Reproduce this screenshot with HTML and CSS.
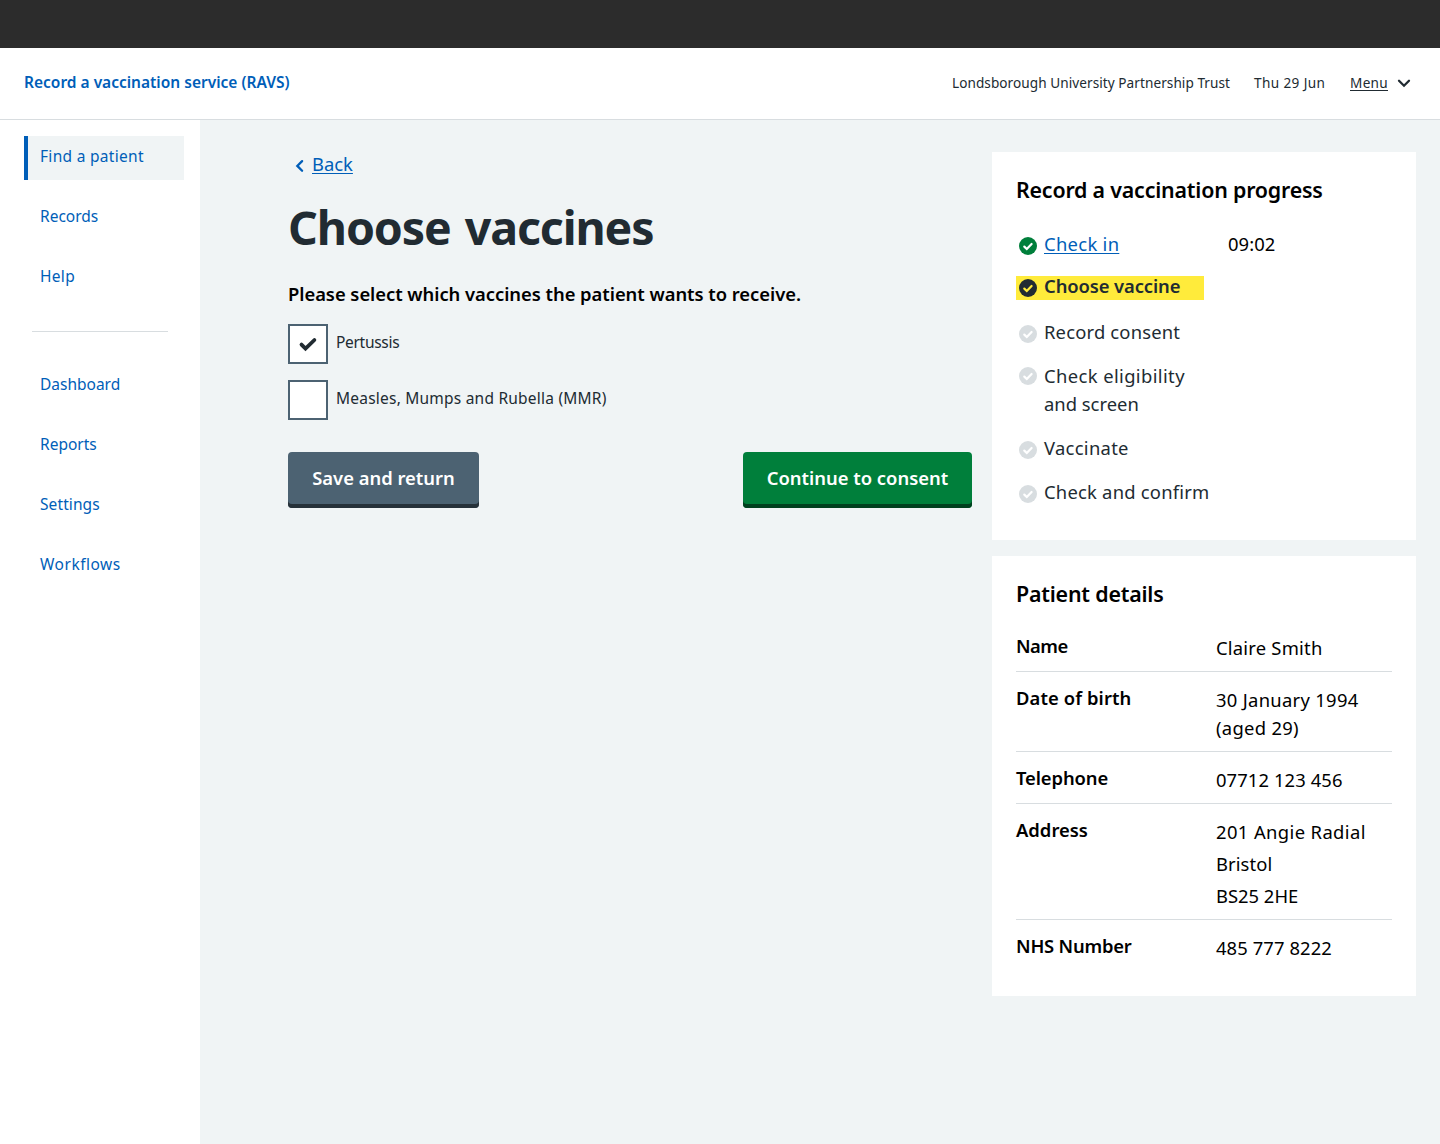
FILE: index.html
```html
<!DOCTYPE html>
<html lang="en">
<head>
<meta charset="utf-8">
<title>Choose vaccines - Record a vaccination service (RAVS)</title>
<link rel="stylesheet" href="styles.css">
</head>
<body>
<svg width="0" height="0" class="sprite" aria-hidden="true">
  <symbol id="tick" viewBox="0 0 18 18">
    <circle cx="9" cy="9" r="9" fill="currentColor" stroke="none"/>
    <path d="M5.3 9.6l2.5 2.4 4.8-5" fill="none" stroke-width="2.2" stroke-linecap="round" stroke-linejoin="miter"/>
  </symbol>
</svg>
<div class="topbar"></div>
<header class="header">
  <a class="brand" href="#">Record a vaccination service (RAVS)</a>
  <div class="header-meta">
    <span class="org">Londsborough University Partnership Trust</span>
    <span class="date t4">Thu 29 Jun</span>
    <a class="menu" href="#"><span class="menu-label t3">Menu</span><svg width="14" height="10" viewBox="0 0 14 10"><path d="M2 2.7l5 5 5-5" fill="none" stroke="#212b32" stroke-width="2.3" stroke-linecap="round" stroke-linejoin="miter"/></svg></a>
  </div>
</header>
<div class="layout">
  <nav class="sidenav">
    <a class="nav-item current t3" href="#">Find a patient</a>
    <a class="nav-item" href="#">Records</a>
    <a class="nav-item t3" href="#">Help</a>
    <hr class="nav-rule">
    <a class="nav-item" href="#">Dashboard</a>
    <a class="nav-item" href="#">Reports</a>
    <a class="nav-item t1" href="#">Settings</a>
    <a class="nav-item t5" href="#">Workflows</a>
  </nav>
  <div class="page">
    <main class="content">
      <a class="back" href="#"><svg width="24" height="24" viewBox="0 0 24 24"><path d="M14.1 7.1L9.3 11.9l4.8 4.9" fill="none" stroke="currentColor" stroke-width="2.3" stroke-linecap="round" stroke-linejoin="miter"/></svg><span class="link">Back</span></a>
      <h1 class="title">Choose vaccines</h1>
      <p class="hint">Please select which vaccines the patient wants to receive.</p>
      <div class="choices">
        <label class="choice"><span class="box"><svg width="20" height="16" viewBox="0 0 20 16"><path d="M3.5 8.6l4 4 8.9-8.6" fill="none" stroke="#212b32" stroke-width="3.8" stroke-linecap="round"/></svg></span><span class="choice-label tn3">Pertussis</span></label>
        <label class="choice"><span class="box"></span><span class="choice-label t25">Measles, Mumps and Rubella (MMR)</span></label>
      </div>
      <div class="actions">
        <button class="btn secondary">Save and return</button>
        <button class="btn primary">Continue to consent</button>
      </div>
    </main>
    <aside class="aside">
      <section class="card progress">
        <h2 class="card-title tn2">Record a vaccination progress</h2>
        <ol class="steps">
          <li class="step done"><svg class="icon"><use href="#tick"/></svg><a class="step-name link t3" href="#">Check in</a><span class="time t1">09:02</span></li>
          <li class="step active"><svg class="icon"><use href="#tick"/></svg><span class="step-name tn1">Choose vaccine</span></li>
          <li class="step"><svg class="icon"><use href="#tick"/></svg><span class="step-name t2">Record consent</span></li>
          <li class="step two-line"><svg class="icon"><use href="#tick"/></svg><span class="step-name"><span class="t4">Check eligibility</span><br><span>and screen</span></span></li>
          <li class="step"><svg class="icon"><use href="#tick"/></svg><span class="step-name t3">Vaccinate</span></li>
          <li class="step"><svg class="icon"><use href="#tick"/></svg><span class="step-name t25">Check and confirm</span></li>
        </ol>
      </section>
      <section class="card details">
        <h2 class="card-title tn2">Patient details</h2>
        <dl class="summary">
          <div class="row"><dt class="tn4">Name</dt><dd><span class="t25">Claire Smith</span></dd></div>
          <div class="row"><dt class="t1">Date of birth</dt><dd><span class="t3">30 January 1994</span><span class="t3">(aged 29)</span></dd></div>
          <div class="row"><dt class="tn1">Telephone</dt><dd><span class="t1">07712 123 456</span></dd></div>
          <div class="row"><dt>Address</dt><dd class="spaced"><span class="t4">201 Angie Radial</span><span class="t1">Bristol</span><span>BS25 2HE</span></dd></div>
          <div class="row"><dt class="tn2">NHS Number</dt><dd><span class="t1">485 777 8222</span></dd></div>
        </dl>
      </section>
    </aside>
  </div>
</div>
</body>
</html>
```
FILE: styles.css
```css
* { box-sizing: border-box; }
body {
  margin: 0;
  min-height: 1144px;
  display: flex;
  flex-direction: column;
  font-family: "Noto Sans", "Open Sans", sans-serif;
  font-size: 18.4px;
  line-height: 28px;
  color: #212b32;
  background: #fff;
}
h1, h2, p, ol, dl, dd { margin: 0; padding: 0; }
a { color: #005eb8; text-decoration: none; }
.sprite { display: block; height: 0; }

/* letter-spacing steps */
.tn4 { letter-spacing: -0.5px; }
.tn3 { letter-spacing: -0.3px; }
.tn2 { letter-spacing: -0.2px; }
.tn1 { letter-spacing: -0.1px; }
.t1 { letter-spacing: 0.1px; }
.t2 { letter-spacing: 0.18px; }
.t25 { letter-spacing: 0.22px; }
.t3 { letter-spacing: 0.3px; }
.t4 { letter-spacing: 0.39px; }
.t5 { letter-spacing: 0.5px; }

.topbar { height: 48px; background: #2c2c2c; }

.header {
  height: 72px;
  padding: 0 29px 0 24px;
  display: flex;
  justify-content: space-between;
  align-items: flex-start;
  border-bottom: 1px solid #d8dde0;
  line-height: 24px;
}
.brand { margin-top: 22px; font-size: 15.5px; font-weight: 600; }
.header-meta { margin-top: 23px; display: flex; font-size: 13.6px; }
.org { width: 302px; letter-spacing: 0.06px; }
.date { width: 96px; }
.menu { display: flex; align-items: center; gap: 9px; color: #212b32; }
.menu-label {
  text-decoration: underline;
  text-decoration-thickness: 1px;
  text-underline-offset: 2px;
  text-decoration-skip-ink: none;
}

.layout { flex: 1; display: flex; }
.sidenav {
  width: 200px;
  padding: 16px 16px 0 24px;
  display: flex;
  flex-direction: column;
  gap: 16px;
}
.nav-item {
  height: 44px;
  padding: 8px 12px 12px;
  border-left: 4px solid transparent;
  font-size: 15.5px;
  line-height: 24px;
}
.nav-item.current { background: #f0f4f5; border-left-color: #005eb8; }
.nav-rule {
  width: 136px;
  height: 1px;
  margin: 15px 8px 16px;
  border: 0;
  background: #d8dde0;
}

.page {
  flex: 1;
  padding: 32px 24px 32px 88px;
  display: flex;
  gap: 20px;
  align-items: flex-start;
  background: #f0f4f5;
}
.content { width: 684px; margin-top: -2px; }
.back { display: flex; width: max-content; }
.back svg { margin-top: 4px; }
.link {
  text-decoration: underline;
  text-decoration-thickness: 1px;
  text-underline-offset: 2px;
  text-decoration-skip-ink: none;
}
.title {
  margin-top: 21px;
  font-size: 46.5px;
  line-height: 56px;
  font-weight: 700;
  letter-spacing: -1.1px;
  word-spacing: 3px;
}
.hint { margin-top: 25px; font-weight: 600; color: #000; letter-spacing: -0.04px; }
.choices { margin-top: 16px; display: flex; flex-direction: column; gap: 16px; }
.choice { display: flex; gap: 8px; height: 40px; }
.box {
  width: 40px;
  height: 40px;
  border: 2px solid #4c6272;
  background: #fff;
  display: flex;
  align-items: center;
  justify-content: center;
}
.choice-label { margin-top: 6px; font-size: 15.5px; line-height: 24px; }
.actions { margin-top: 32px; display: flex; justify-content: space-between; }
.btn {
  height: 56px;
  padding: 12px 0 16px;
  border: 0;
  border-radius: 4px;
  font: 600 18.4px/28px "Noto Sans", sans-serif;
  color: #fff;
  text-align: center;
}
.secondary { width: 191px; background: #4c6272; box-shadow: inset 0 -4px #263139; }
.primary { width: 229px; background: #007f3b; box-shadow: inset 0 -4px #00401e; }

.aside { width: 424px; display: flex; flex-direction: column; gap: 16px; }
.card { padding: 22px 24px 0; background: #fff; color: #000; }
.card-title { font-size: 21.4px; line-height: 32px; font-weight: 600; }
.progress { height: 388px; }
.details { height: 440px; }

.steps {
  margin-top: 24px;
  list-style: none;
  display: flex;
  flex-direction: column;
  gap: 16px;
}
.step { display: flex; color: #212b32; }
.icon {
  flex: none;
  width: 18px;
  height: 18px;
  margin: 7px 7px 0 3px;
  color: #d8dde0;
  stroke: #fff;
}
.two-line .icon { margin-top: 5px; }
.done .icon { color: #007f3b; }
.time { margin-left: auto; margin-right: 116.5px; color: #000; }
.active {
  width: 188px;
  height: 24px;
  margin: 2px 0;
  line-height: 20px;
  font-weight: 600;
  background: #ffeb3b;
}
.active .icon { margin-top: 3px; color: #212b32; stroke: #ffeb3b; }

.summary { margin-top: 10px; }
.row {
  display: flex;
  padding: 14px 0 9px;
  border-bottom: 1px solid #d8dde0;
}
.row:last-child { border-bottom: 0; }
dt { width: 200px; margin-top: -2px; font-weight: 600; }
dd { display: flex; flex-direction: column; }
.spaced { gap: 4px; }
```
